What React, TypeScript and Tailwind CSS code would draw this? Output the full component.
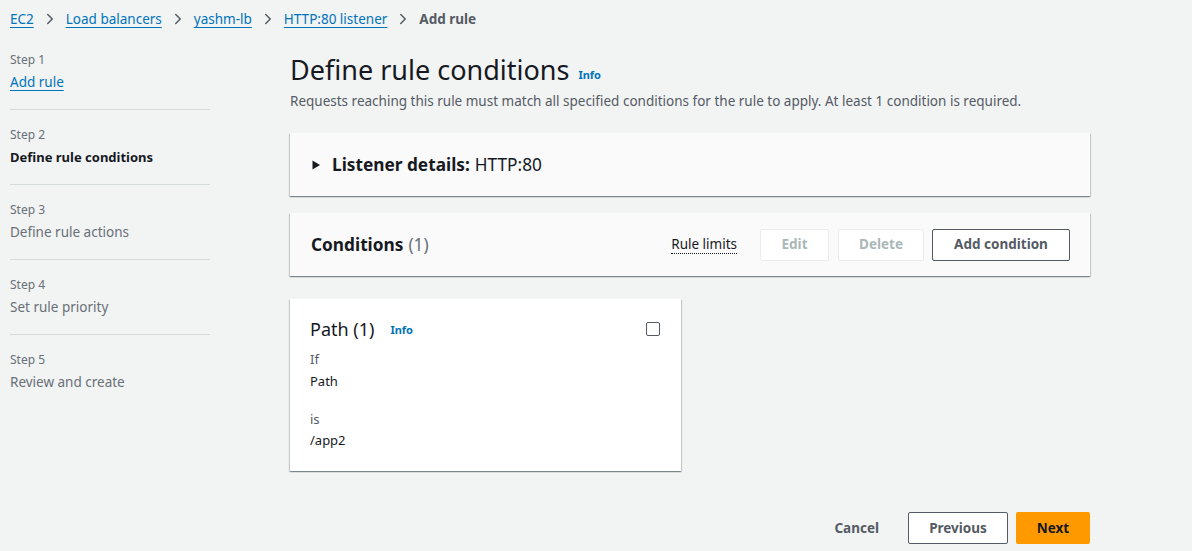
import { ChevronRight } from 'lucide-react';

const crumbs = ['EC2', 'Load balancers', 'yashm-lb', 'HTTP:80 listener'];

const steps = [
  { label: 'Step 1', name: 'Add rule', state: 'link' },
  { label: 'Step 2', name: 'Define rule conditions', state: 'active' },
  { label: 'Step 3', name: 'Define rule actions', state: 'idle' },
  { label: 'Step 4', name: 'Set rule priority', state: 'idle' },
  { label: 'Step 5', name: 'Review and create', state: 'idle' },
];

const cardShadow =
  'shadow-[0_1px_1px_0_rgba(0,28,36,0.3),1px_1px_1px_0_rgba(0,28,36,0.15),-1px_1px_1px_0_rgba(0,28,36,0.15)]';

export default function App() {
  return (
    <div className="min-h-[551px] w-[1192px] bg-[#f2f3f3] text-[#16191f]" style={{ fontFamily: '"Noto Sans", "Open Sans", sans-serif' }}>
      {/* breadcrumbs */}
      <div className="flex h-[38px] items-center px-[10px] text-[13.5px]">
        {crumbs.map((c) => (
          <div key={c} className="flex items-center">
            <a className="text-[#0073bb] underline underline-offset-[3px]">{c}</a>
            <ChevronRight className="mx-[7px] h-[18px] w-[18px] text-[#545b64]" strokeWidth={2} />
          </div>
        ))}
        <span className="font-bold text-[#545b64]">Add rule</span>
      </div>

      <div className="flex">
        {/* wizard steps */}
        <div className="ml-[10px] w-[200px] pt-[12px]">
          {steps.map((s, i) => (
            <div key={s.label} className={`pb-[17px] ${i > 0 ? 'border-t border-[#d5dbdb] pt-[16px]' : 'pt-[1px]'}`}>
              <div className="text-[12px] leading-[18px] text-[#687078]">{s.label}</div>
              <div
                className={`mt-[3px] leading-[20px] ${
                  s.state === 'link'
                    ? 'text-[13.5px] text-[#0073bb] underline underline-offset-[3px]'
                    : s.state === 'active'
                      ? 'text-[13px] font-bold text-[#16191f]'
                      : 'text-[13.5px] text-[#687078]'
                }`}
              >
                {s.name}
              </div>
            </div>
          ))}
        </div>

        {/* main */}
        <div className="ml-[80px] w-[800px]">
          <div className="mt-[14px] flex items-end">
            <h1 className="text-[27px] leading-[36px] text-[#16191f]">Define rule conditions</h1>
            <span className="mb-[5px] ml-[9px] text-[11px] font-bold text-[#0073bb]">Info</span>
          </div>
          <p className="mt-[3px] text-[13.5px] leading-[20px] text-[#545b64]">
            Requests reaching this rule must match all specified conditions for the rule to apply. At least 1 condition is required.
          </p>

          <div className={`mt-[22px] flex h-[63px] items-center bg-[#fafafa] px-[20px] ${cardShadow}`}>
            <svg width="12" height="12" viewBox="0 0 12 12" className="mr-[10px]">
              <path d="M2.5 1.5 L10 6 L2.5 10.5 Z" fill="#16191f" />
            </svg>
            <span className="text-[17.25px] font-bold">Listener details:</span>
            <span className="ml-[5px] text-[17.25px]">HTTP:80</span>
          </div>

          <div className={`mt-[17px] flex h-[63px] items-center bg-[#fafafa] pl-[21px] pr-[20px] ${cardShadow}`}>
            <span className="text-[17.25px] font-bold">Conditions</span>
            <span className="ml-[5px] text-[17.25px] text-[#687078]">(1)</span>
            <div className="ml-auto flex items-center">
              <span className="mr-[23px] border-b border-dotted border-[#16191f] text-[13.5px] leading-[18px]">Rule limits</span>
              <button className="h-[32px] w-[69px] rounded-[2px] border border-[#eaeded] bg-white text-[13.5px] font-bold text-[#aab7b8]">Edit</button>
              <button className="ml-[9px] h-[32px] w-[86px] rounded-[2px] border border-[#eaeded] bg-white text-[13.5px] font-bold text-[#aab7b8]">Delete</button>
              <button className="ml-[8px] h-[32px] w-[138px] rounded-[2px] border border-[#545b64] bg-white text-[13.5px] font-bold text-[#545b64]">Add condition</button>
            </div>
          </div>

          <div className={`mt-[23px] h-[172px] w-[391px] bg-white px-[20px] pt-[19px] ${cardShadow}`}>
            <div className="flex items-center">
              <span className="text-[18px] leading-[22px]">Path (1)</span>
              <span className="ml-[16px] mt-[3px] text-[11px] font-bold text-[#0073bb]">Info</span>
              <span className="ml-auto mr-[1px] h-[14px] w-[14px] rounded-[2px] border-[1.5px] border-[#545b64]" />
            </div>
            <div className="mt-[9px] text-[13px] leading-[20px] text-[#545b64]">If</div>
            <div className="mt-[2px] text-[13px] leading-[20px]">Path</div>
            <div className="mt-[18px] text-[13px] leading-[20px] text-[#545b64]">is</div>
            <div className="mt-[1px] text-[13px] leading-[20px]">/app2</div>
          </div>

          <div className="mt-[41px] flex items-center justify-end">
            <span className="mr-[29px] text-[13.5px] font-bold text-[#545b64]">Cancel</span>
            <button className="h-[32px] w-[100px] rounded-[2px] border border-[#545b64] bg-white text-[13.5px] font-bold text-[#545b64]">Previous</button>
            <button className="ml-[8px] h-[32px] w-[74px] rounded-[2px] bg-[#ff9900] text-[13.5px] font-bold text-[#16191f]">Next</button>
          </div>
        </div>
      </div>
    </div>
  );
}
